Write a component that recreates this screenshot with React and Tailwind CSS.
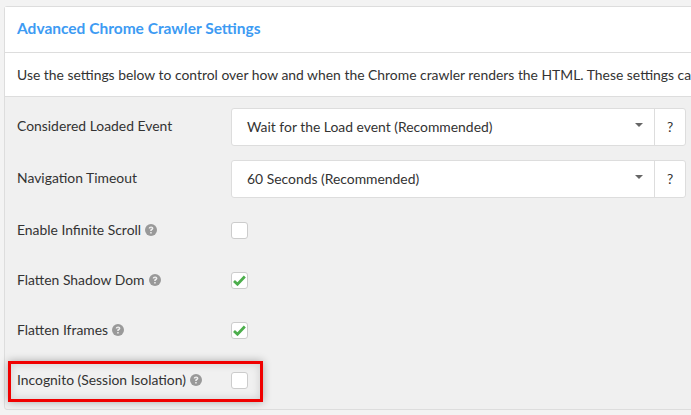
const Help = () => (
  <svg viewBox="0 0 12 12" className="w-[12px] h-[12px] shrink-0">
    <circle cx="6" cy="6" r="6" fill="#999" />
    <path d="M3.7 4.6c0-1.4 1-2.2 2.4-2.2 1.4 0 2.3.8 2.3 1.9 0 .9-.5 1.3-1.1 1.7-.5.3-.6.5-.6 1H5.2c0-1 .2-1.4.9-1.9.5-.3.7-.5.7-.8 0-.3-.3-.6-.7-.6-.5 0-.8.3-.8.9H3.7z" fill="#efefef" />
    <rect x="5.2" y="8" width="1.5" height="1.5" fill="#efefef" />
  </svg>
)

const SelectRow = ({ label, value }) => (
  <div className="flex items-center h-[38px] mb-[14px]">
    <div className="w-[214px] shrink-0 -mt-[2px]">{label}</div>
    <div className="flex w-[455px] h-[38px] bg-white border border-[#ddd] rounded-[3px]">
      <div className="flex-1 flex items-center justify-between pl-[15px] pr-[11px] border-r border-[#ddd]">
        <span>{value}</span>
        <span className="w-0 h-0 border-x-[4px] border-x-transparent border-t-[4px] border-t-[#666] -mt-[4px]" />
      </div>
      <div className="w-[30px] flex items-center justify-center">?</div>
    </div>
  </div>
)

const CheckRow = ({ label, checked }) => (
  <div className="flex items-center h-[17px] mb-[33px]">
    <div className="w-[214px] shrink-0 flex items-center gap-[4px] -mt-[1px]">
      <span>{label}</span>
      <Help />
    </div>
    <div className="w-[17px] h-[17px] bg-white border border-[#ccc] rounded-[3px] flex items-center justify-center">
      {checked && (
        <svg viewBox="0 0 14 12" className="w-[13px] h-[11px]">
          <path d="M1 6.5l3.8 3.6 8-8.4" fill="none" stroke="#4cae4c" strokeWidth="3" />
        </svg>
      )}
    </div>
  </div>
)

export default function App() {
  return (
    <div className="relative w-[691px] h-[415px] overflow-hidden bg-[#f3f3f3] pt-[6px] pl-1 text-[13.9px] text-[#333] font-['Lato',sans-serif]">
      <div className="w-[800px] h-[404px] border border-[#ddd] rounded-[3px] bg-[#f0f0f0]">
        <div className="h-[46px] bg-white border-b border-[#ddd] pl-3 pb-[2px] flex items-center">
          <h3 className="text-[15.5px] font-bold text-[#3d9bf3]">Advanced Chrome Crawler Settings</h3>
        </div>
        <div className="h-[44px] bg-white border-b border-[#ddd] pl-3 pt-[2px] flex items-center whitespace-nowrap">
          Use the settings below to control over how and when the Chrome crawler renders the HTML. These settings can
        </div>
        <div className="pl-3 pt-[11px]">
          <SelectRow label="Considered Loaded Event" value="Wait for the Load event (Recommended)" />
          <SelectRow label="Navigation Timeout" value="60 Seconds (Recommended)" />
          <div className="pt-[10px]">
            <CheckRow label="Enable Infinite Scroll" />
            <CheckRow label="Flatten Shadow Dom" checked />
            <CheckRow label="Flatten Iframes" checked />
            <CheckRow label="Incognito (Session Isolation)" />
          </div>
        </div>
      </div>
      <div className="absolute left-[8px] top-[361px] w-[255px] h-[41px] border-[3px] border-[#f00000] shadow-[0_0_8px_rgba(0,0,0,0.3),inset_0_0_8px_rgba(0,0,0,0.15)]" />
    </div>
  )
}
